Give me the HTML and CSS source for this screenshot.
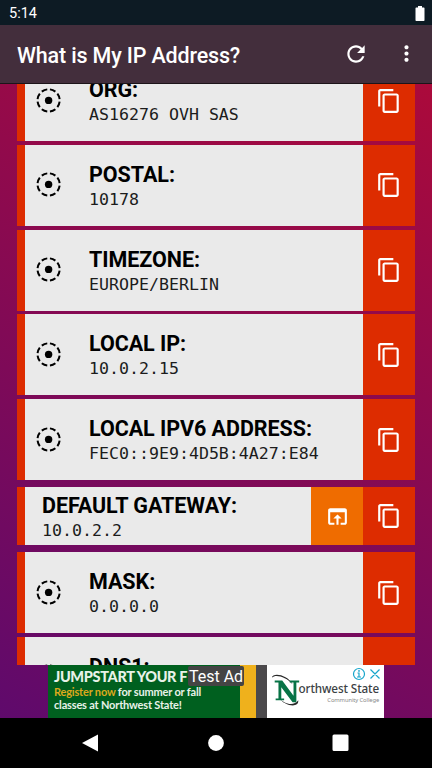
FILE: index.html
```html
<!DOCTYPE html>
<html lang="en">
<head>
<meta charset="utf-8">
<title>What is My IP Address?</title>
<link rel="stylesheet" href="styles.css">
</head>
<body>
<svg class="defs" width="0" height="0">
  <symbol id="copy" viewBox="0 0 24 24"><path d="M16 1H4c-1.100 0-2 .9-2 2v14h2V3h12V1zm3 4H8c-1.100 0-2 .9-2 2v14c0 1.100.9 2 2 2h11c1.100 0 2-.9 2-2V7c0-1.100-.9-2-2-2zm0 16H8V7h11v14z"/></symbol>
  <symbol id="target" viewBox="0 0 26 26"><circle cx="12.600" cy="12.400" r="3.700"/><circle cx="12.600" cy="12.400" r="11.100" fill="none" stroke="currentColor" stroke-width="2" pathLength="80" stroke-dasharray="6.800 3.200" stroke-dashoffset="-1.600"/></symbol>
</svg>
<header class="status">
  <span>5:14</span>
  <svg class="battery" viewBox="0 0 10 15"><path d="M3 0h4v1.500h1.800q.7 0 .7.700v12q0 .7-.7.700H1.200q-.7 0-.7-.7v-12q0-.7.700-.7H3z"/></svg>
</header>
<div class="appbar">
  <h1>What is My IP Address?</h1>
  <svg class="refresh" viewBox="0 0 24 24"><path d="M17.650 6.350C16.200 4.900 14.210 4 12 4c-4.420 0-7.990 3.580-7.990 8s3.570 8 7.990 8c3.730 0 6.840-2.550 7.730-6h-2.080c-.82 2.330-3.040 4-5.650 4-3.310 0-6-2.690-6-6s2.690-6 6-6c1.660 0 3.140.69 4.220 1.780L13 11h7V4l-2.350 2.350z"/></svg>
  <svg class="more" viewBox="0 0 24 24"><path d="M12 8c1.100 0 2-.9 2-2s-.9-2-2-2-2 .9-2 2 .9 2 2 2zm0 2c-1.100 0-2 .9-2 2s.9 2 2 2 2-.9 2-2-.9-2-2-2zm0 6c-1.100 0-2 .9-2 2s.9 2 2 2 2-.9 2-2-.9-2-2-2z"/></svg>
</div>
<main>
  <div class="list">
    <section class="card"><svg class="target"><use href="#target"/></svg><div class="info"><h2>ORG:</h2><p>AS16276 OVH SAS</p></div><div class="action"><svg><use href="#copy"/></svg></div></section>
    <section class="card"><svg class="target"><use href="#target"/></svg><div class="info"><h2>POSTAL:</h2><p>10178</p></div><div class="action"><svg><use href="#copy"/></svg></div></section>
    <section class="card"><svg class="target"><use href="#target"/></svg><div class="info"><h2>TIMEZONE:</h2><p>EUROPE/BERLIN</p></div><div class="action"><svg><use href="#copy"/></svg></div></section>
    <section class="card"><svg class="target"><use href="#target"/></svg><div class="info"><h2>LOCAL IP:</h2><p>10.0.2.15</p></div><div class="action"><svg><use href="#copy"/></svg></div></section>
    <section class="card"><svg class="target"><use href="#target"/></svg><div class="info"><h2>LOCAL IPV6 ADDRESS:</h2><p>FEC0::9E9:4D5B:4A27:E84</p></div><div class="action"><svg><use href="#copy"/></svg></div></section>
    <section class="card gateway"><div class="info"><h2>DEFAULT GATEWAY:</h2><p>10.0.2.2</p></div><div class="action open"><svg viewBox="0 0 24 24"><path d="M19 4H5c-1.110 0-2 .9-2 2v12c0 1.100.89 2 2 2h4v-2H5V8h14v10h-4v2h4c1.100 0 2-.9 2-2V6c0-1.100-.89-2-2-2zm-7 6l-4 4h3v6h2v-6h3l-4-4z"/></svg></div><div class="action"><svg><use href="#copy"/></svg></div></section>
    <section class="card"><svg class="target"><use href="#target"/></svg><div class="info"><h2>MASK:</h2><p>0.0.0.0</p></div><div class="action"><svg><use href="#copy"/></svg></div></section>
    <section class="card"><svg class="target"><use href="#target"/></svg><div class="info"><h2>DNS1:</h2></div><div class="action"></div></section>
  </div>
  <aside class="ad">
    <div class="pitch"><strong>JUMPSTART YOUR F</strong><span><em>Register now</em> for summer or fall</span><span>classes at Northwest State!</span></div>
    <div class="gold"></div><div class="gray"></div>
    <div class="brand">
      <svg class="swoosh" viewBox="0 0 34 36"><path d="M2 5C3-1 19 2 24 12C17 4 6 1 2 5zM9 26C15 33 25 36 30 29C31 38 15 35 9 26z" fill="#292929"/><path d="M5 8h8l12 16V10h-4V8h10v2h-3v21h-4L12 15v12h3v2H6v-2h3V10H5z" fill="#087346"/></svg>
      <div class="name"><b>orthwest State</b><small>Community College</small></div>
      <svg class="choices" viewBox="0 0 30 14"><g fill="none" stroke="#16a5cb" stroke-width="1.200"><circle cx="7" cy="7" r="5.500"/><path d="M5.500 6H7v4M5 10h4M18.500 2.500l9 9M27.500 2.500l-9 9"/></g><circle cx="7" cy="3.900" r=".9" fill="#16a5cb"/></svg>
    </div>
    <span class="test">Test Ad</span>
  </aside>
</main>
<nav><svg viewBox="0 0 432 50"><path d="M82 25L98 16.500v17zM334 16.500h13q1.500 0 1.500 1.500v13.500q0 1.500-1.500 1.500h-13q-1.500 0-1.500-1.500V18q0-1.500 1.500-1.500z"/><circle cx="216" cy="25" r="7.900"/></svg></nav>
</body>
</html>
```
FILE: styles.css
```css
* { box-sizing: border-box; }
body {
  margin: 0;
  width: 432px;
  height: 768px;
  overflow: hidden;
  display: flex;
  flex-direction: column;
  font-family: Roboto, sans-serif;
  background: #000;
}
h1, h2, p { margin: 0; }
svg { display: block; fill: currentColor; flex: none; }
.defs { position: absolute; }

.status {
  height: 25px;
  flex: none;
  padding: 1px 7px 0 9px;
  display: flex;
  align-items: center;
  justify-content: space-between;
  background: #0d1b24;
  color: #fff;
  font-size: 14.500px;
}
.battery { width: 10px; height: 15px; }
.appbar {
  height: 59px;
  flex: none;
  padding: 0 13px 1px 17px;
  display: flex;
  align-items: center;
  background: #432e3c;
  border-bottom: 1px solid #1c1419;
  color: #fff;
}
.appbar h1 { flex: 1; font-size: 21.500px; letter-spacing: -.16px; font-weight: 500; line-height: 26px; padding-top: 4px; white-space: nowrap; }
.refresh { width: 26px; height: 26px; margin-right: 25px; }
.more { width: 25px; height: 25px; }

main {
  height: 634px;
  flex: none;
  display: flex;
  flex-direction: column;
  align-items: center;
  background: linear-gradient(28deg, #5f0a6c, #ab0a3b);
}
.list { width: 398px; height: 581px; overflow: hidden; }
.card {
  height: 81px;
  margin-bottom: 3.750px;
  display: flex;
  align-items: center;
  border-left: 8px solid #dd2c00;
  background: #eaeaea;
  color: #000;
}
.card:first-child { margin-top: -24px; }
.target { width: 26px; height: 26px; margin: 0 27px 0 11px; }
.info { flex: 1; height: 49px; white-space: nowrap; }
.info h2 { font-size: 21.500px; letter-spacing: -.05px; font-weight: 700; line-height: 28px; }
.info p { font: 16.600px/22px "DejaVu Sans Mono", monospace; color: #1c1c1c; }
.action {
  width: 52px;
  align-self: stretch;
  display: flex;
  align-items: center;
  justify-content: center;
  background: #dd2c00;
  color: #fff;
}
.action svg { width: 26px; height: 26px; }
.gateway { height: 58px; margin: 7px 0; padding-left: 17px; }
.open { background: #ef6c00; }
.open svg { width: 25px; height: 25px; }

.ad {
  position: relative;
  width: 336px;
  height: 53px;
  display: flex;
  background: #fff;
}
.pitch {
  width: 192px;
  padding: 3px 0 0 6px;
  overflow: hidden;
  display: flex;
  flex-direction: column;
  background: #00601f;
  color: #e8f2e8;
  font: 700 11px/13px Lato, sans-serif;
  letter-spacing: -.18px;
  white-space: nowrap;
}
.pitch strong { font-size: 14.500px; line-height: 17px; letter-spacing: -.35px; }
.pitch em { font-style: normal; color: #dca91c; }
.gold { width: 16px; background: #efb11c; }
.gray { width: 10.500px; background: #4b494b; }
.brand { flex: 1; display: flex; }
.swoosh { width: 32px; height: 34px; margin: 8px 0 0 3px; }
.name { display: flex; flex-direction: column; padding-top: 15px; margin-left: -3px; white-space: nowrap; align-items: flex-end; }
.name b { font: 500 11.700px/16px "Noto Sans", sans-serif; color: #3b4144; letter-spacing: -.1px; }
.name small { font: 5.800px/8px "Noto Sans", sans-serif; color: #888; letter-spacing: -.1px; }
.choices { position: absolute; right: 2px; top: 2px; width: 30px; height: 14px; }
.test {
  position: absolute;
  left: 140px;
  top: 1px;
  width: 56px;
  height: 20px;
  border-radius: 2px;
  background: #444;
  color: #fff;
  font-size: 16px;
  line-height: 21px;
  text-align: center;
  white-space: nowrap;
}
nav { height: 50px; color: #fff; background: #000; }
nav svg { width: 432px; height: 50px; }
```
